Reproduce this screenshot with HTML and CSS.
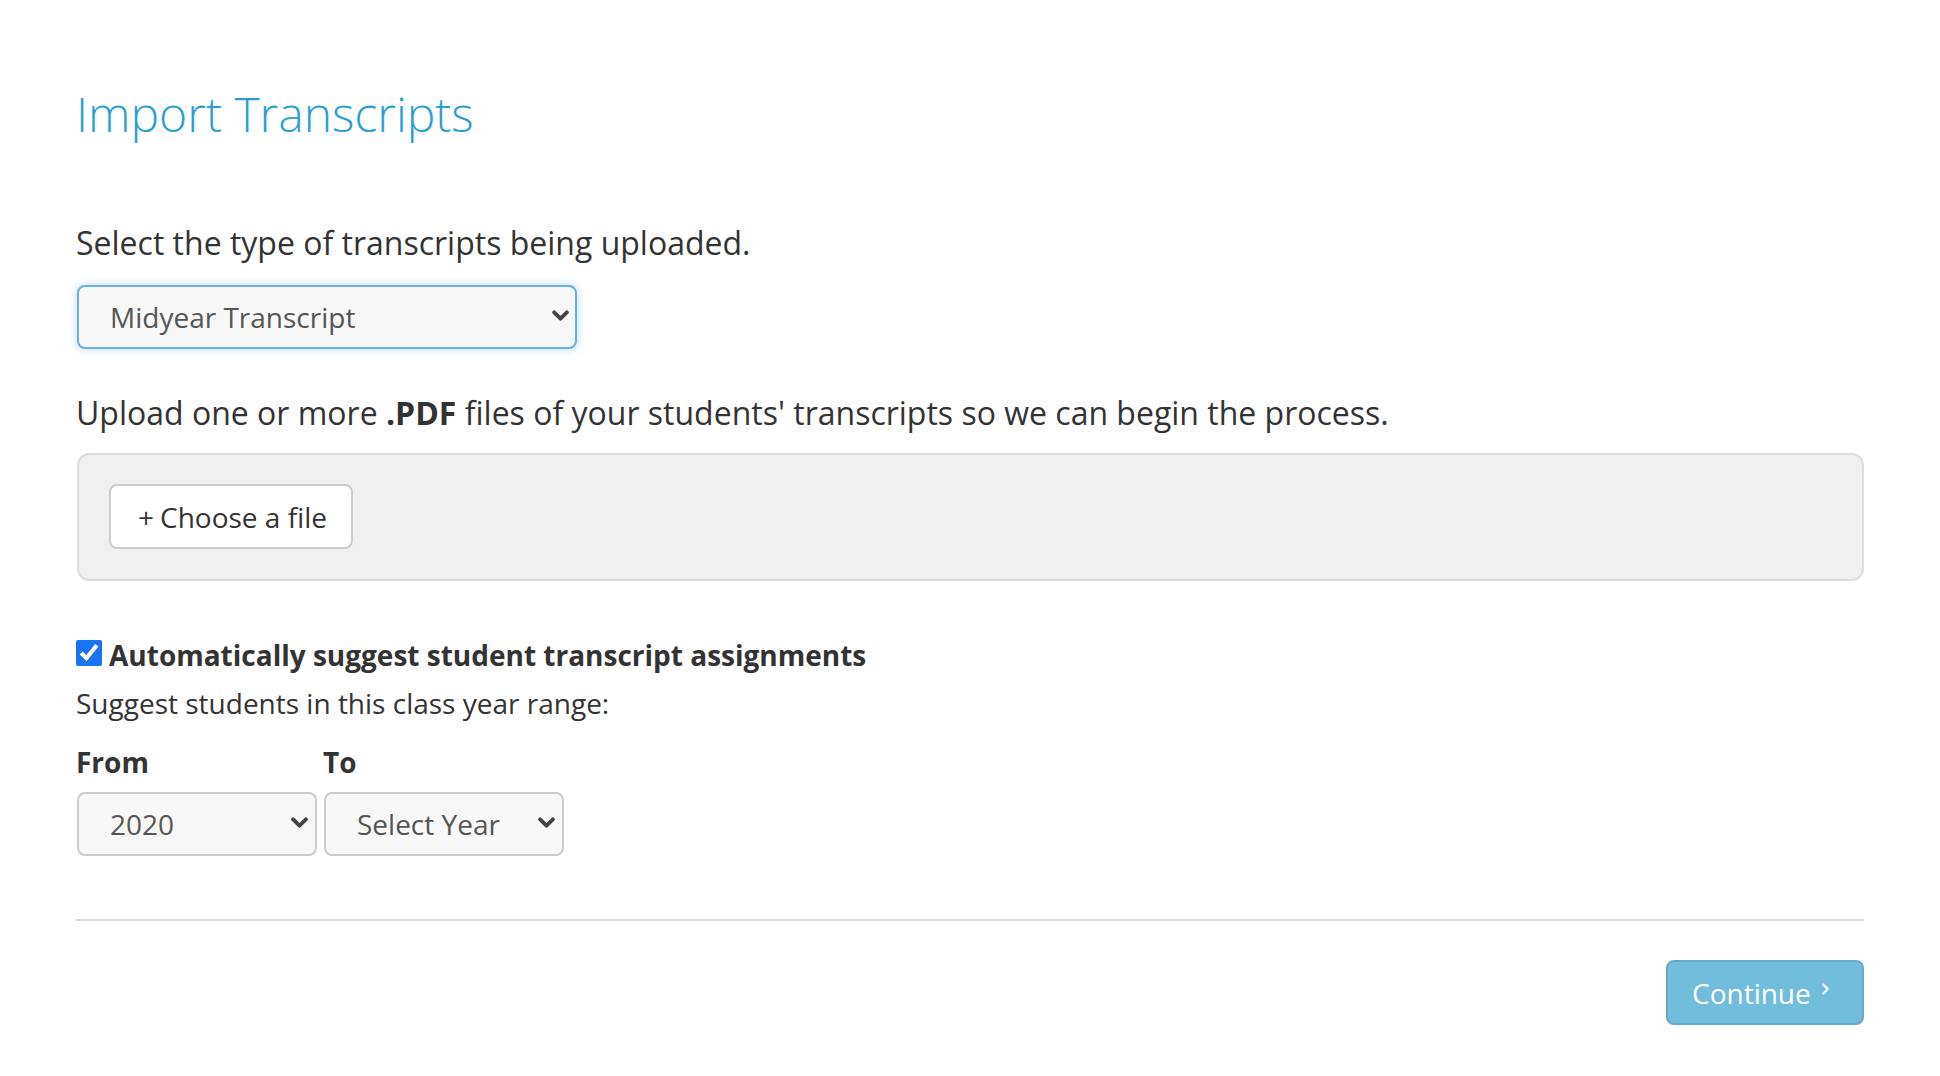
FILE: index.html
```html
<!DOCTYPE html>
<html lang="en">
<head>
<meta charset="utf-8">
<title>Import Transcripts</title>
<link rel="stylesheet" href="styles.css">
</head>
<body>
<main class="page">
  <h1 class="title">Import Transcripts</h1>

  <p class="lead">Select the type of transcripts being uploaded.</p>
  <div class="select-wrap select-type">
    <select class="select select-focus">
      <option>Midyear Transcript</option>
    </select>
    <svg class="chevron" viewBox="0 0 16 10" aria-hidden="true"><path d="M2 2 L8 8 L14 2" fill="none" stroke="#444" stroke-width="3.6" stroke-linecap="round" stroke-linejoin="round"/></svg>
  </div>

  <p class="lead upload-text">Upload one or more <strong>.PDF</strong> files of your students' transcripts so we can begin the process.</p>
  <div class="dropzone">
    <button class="file-btn" type="button"><span class="plus">+</span>Choose a file</button>
  </div>

  <label class="check-row">
    <input type="checkbox" class="check" checked>
    <span class="check-label">Automatically suggest student transcript assignments</span>
  </label>
  <p class="text suggest">Suggest students in this class year range:</p>

  <div class="range">
    <div class="field">
      <div class="field-label">From</div>
      <div class="select-wrap select-year">
        <select class="select">
          <option>2020</option>
        </select>
        <svg class="chevron" viewBox="0 0 16 10" aria-hidden="true"><path d="M2 2 L8 8 L14 2" fill="none" stroke="#444" stroke-width="3.6" stroke-linecap="round" stroke-linejoin="round"/></svg>
      </div>
    </div>
    <div class="field">
      <div class="field-label">To</div>
      <div class="select-wrap select-year">
        <select class="select">
          <option>Select Year</option>
        </select>
        <svg class="chevron" viewBox="0 0 16 10" aria-hidden="true"><path d="M2 2 L8 8 L14 2" fill="none" stroke="#444" stroke-width="3.6" stroke-linecap="round" stroke-linejoin="round"/></svg>
      </div>
    </div>
  </div>

  <hr class="divider">

  <div class="actions">
    <button class="continue" type="button">Continue<svg class="cont-chev" viewBox="0 0 8 12" aria-hidden="true"><path d="M2 2 L6 6 L2 10" fill="none" stroke="#fff" stroke-width="1.8" stroke-linecap="round" stroke-linejoin="round"/></svg></button>
  </div>
</main>
</body>
</html>
```

FILE: styles.css
```css
* {
  box-sizing: border-box;
}

html, body {
  margin: 0;
  padding: 0;
  background: #ffffff;
}

body {
  font-family: "Open Sans", "DejaVu Sans", sans-serif;
  font-size: 28px;
  color: #333333;
}

.page {
  padding: 0 76px 40px 76px;
}

.title {
  margin: 86px 0 80px 0;
  font-size: 48px;
  font-weight: 300;
  line-height: 55px;
  color: #2a9fd6;
}

.lead {
  margin: 0;
  line-height: 44px;
  font-size: 32px;
  color: #333333;
}

.lead strong {
  font-weight: 700;
}

.text {
  margin: 0;
  line-height: 40px;
  font-size: 28px;
  color: #333333;
}

.select-wrap {
  position: relative;
}

.select-type {
  width: 500px;
  height: 64px;
  margin: 20px 0 0 1px;
}

.select {
  -webkit-appearance: none;
  appearance: none;
  width: 100%;
  height: 100%;
  margin: 0;
  padding: 0 40px 0 31px;
  font-family: "Open Sans", "DejaVu Sans", sans-serif;
  font-size: 28px;
  color: #555555;
  background: #f8f8f8;
  border: 2px solid #cccccc;
  border-radius: 8px;
  outline: none;
}

.select-focus {
  border-color: #66afe9;
  box-shadow: 0 0 10px rgba(102, 175, 233, 0.45);
}

.chevron {
  position: absolute;
  top: 50%;
  right: 8px;
  width: 17px;
  height: 11px;
  margin-top: -7px;
  pointer-events: none;
}

.upload-text {
  margin-top: 42px;
}

.dropzone {
  margin: 18px 0 0 1px;
  padding: 29px 30px 30px 30px;
  background: #f0f0f0;
  border: 2px solid #dddddd;
  border-radius: 12px;
}

.file-btn {
  display: inline-flex;
  align-items: center;
  height: 65px;
  padding: 0 24px 0 27px;
  font-family: "Open Sans", "DejaVu Sans", sans-serif;
  font-size: 28px;
  color: #333333;
  background: #ffffff;
  border: 2px solid #cccccc;
  border-radius: 8px;
}

.plus {
  margin-right: 6px;
}

.check-row {
  display: flex;
  align-items: center;
  gap: 7px;
  margin-top: 54px;
  line-height: 40px;
}

.check {
  width: 26px;
  height: 26px;
  margin: 0;
  accent-color: #1a73f0;
  position: relative;
  top: -2px;
}

.check-label {
  font-weight: 700;
  font-size: 28px;
  color: #333333;
}

.suggest {
  margin-top: 8px;
}

.range {
  display: grid;
  grid-template-columns: 240px 240px;
  gap: 7px;
  margin: 19px 0 0 1px;
}

.field {
  display: flex;
  flex-direction: column;
  gap: 10px;
}

.field-label {
  font-weight: 700;
  line-height: 40px;
  margin-left: -1px;
}

.select-year {
  width: 240px;
  height: 64px;
}

.select-year .chevron {
  right: 9px;
}

.divider {
  margin: 63px 0 0 0;
  border: 0;
  border-top: 2px solid #dddddd;
  height: 0;
}

.actions {
  display: flex;
  justify-content: flex-end;
  margin-top: 39px;
}

.continue {
  display: inline-flex;
  align-items: center;
  height: 65px;
  width: 198px;
  padding: 0 0 0 24px;
  font-family: "Open Sans", "DejaVu Sans", sans-serif;
  font-size: 28px;
  color: #ffffff;
  background: #72bddc;
  border: 2px solid #66a9c8;
  border-radius: 8px;
}

.cont-chev {
  width: 9px;
  height: 14px;
  margin-left: 10px;
  margin-top: -7px;
}
```
